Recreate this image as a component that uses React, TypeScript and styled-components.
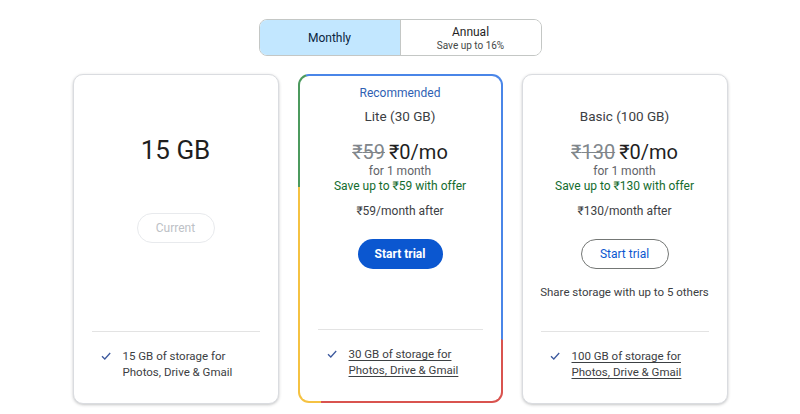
import styled, { createGlobalStyle, css } from "styled-components";

const GlobalStyle = createGlobalStyle`
  body {
    margin: 0;
    background: #ffffff;
    font-family: Roboto, "Liberation Sans", "DejaVu Sans", sans-serif;
    color: #1f1f1f;
  }
`;

const Page = styled.div`
  width: 800px;
  height: 414px;
  display: flex;
  flex-direction: column;
  align-items: center;
  padding-top: 19px;
  box-sizing: border-box;
  overflow: hidden;
`;

const Toggle = styled.div`
  display: flex;
  width: 283px;
  height: 37px;
  border: 1px solid #c4c7c5;
  border-radius: 8px;
  overflow: hidden;
  box-sizing: border-box;
`;

const ToggleOption = styled.div<{ $active?: boolean }>`
  flex: 1;
  display: flex;
  flex-direction: column;
  align-items: center;
  justify-content: center;
  font-size: 12px;
  color: ${(p) => (p.$active ? "#0a2540" : "#1f1f1f")};
  background: ${(p) => (p.$active ? "#c2e7ff" : "#ffffff")};
  border-right: ${(p) => (p.$active ? "1px solid #c4c7c5" : "none")};
`;

const ToggleSub = styled.span`
  font-size: 10px;
  color: #444746;
  margin-top: 1px;
`;

const Cards = styled.div`
  display: flex;
  gap: 19px;
  margin-top: 18px;
`;

const Card = styled.div`
  width: 206px;
  height: 330px;
  box-sizing: border-box;
  border: 1px solid #dadce0;
  border-radius: 10px;
  box-shadow: 0 1px 3px rgba(60, 64, 67, 0.3);
  background: #fff;
  display: flex;
  flex-direction: column;
`;

const RainbowFrame = styled.div`
  width: 205px;
  height: 329px;
  box-sizing: border-box;
  padding: 2px;
  border-radius: 11px;
  background: conic-gradient(
    from 0deg at 50% 50%,
    #4a86e8 0deg 135deg,
    #d9534f 135deg 206deg,
    #f5c242 206deg 297deg,
    #4c9a5e 297deg 330deg,
    #4a86e8 330deg 360deg
  );
  display: flex;
`;

const RainbowInner = styled.div`
  flex: 1;
  background: #fff;
  border-radius: 9px;
  display: flex;
  flex-direction: column;
`;

const Top = styled.div<{ $pad: number }>`
  flex: 1;
  display: flex;
  flex-direction: column;
  align-items: center;
  padding-top: ${(p) => p.$pad}px;
  text-align: center;
`;

const Recommended = styled.div<{ $hidden?: boolean }>`
  font-size: 12px;
  line-height: 16px;
  color: #2f5fb3;
  visibility: ${(p) => (p.$hidden ? "hidden" : "visible")};
`;

const PlanName = styled.div`
  font-size: 13.5px;
  line-height: 18px;
  color: #3c4043;
  margin-top: 6px;
`;

const Capacity = styled.div`
  font-size: 26px;
  line-height: 32px;
  color: #1f1f1f;
`;

const Price = styled.div`
  font-size: 20px;
  line-height: 24px;
  color: #1f1f1f;
  margin-top: 15px;
`;

const Old = styled.span`
  color: #80868b;
  text-decoration: line-through;
  text-decoration-thickness: 1px;
  margin-right: 4px;
`;

const Small = styled.div<{ $tone?: "gray" | "green" | "dark"; $gap?: number }>`
  font-size: 12px;
  line-height: 15px;
  margin-top: ${(p) => p.$gap ?? 0}px;
  color: ${(p) =>
    p.$tone === "green" ? "#146c2e" : p.$tone === "dark" ? "#3c4043" : "#5f6368"};
`;

const Button = styled.button<{ $variant: "filled" | "outlined" | "disabled"; $gap: number }>`
  height: 30px;
  border-radius: 15px;
  font-family: inherit;
  font-size: 12px;
  margin-top: ${(p) => p.$gap}px;
  cursor: pointer;
  ${(p) =>
    p.$variant === "filled"
      ? css`
          background: #0b57d0;
          color: #fff;
          border: none;
          width: 85px;
          font-weight: 700;
        `
      : p.$variant === "outlined"
      ? css`
          background: #fff;
          color: #0b57d0;
          border: 1px solid #747775;
          width: 88px;
        `
      : css`
          background: #fff;
          color: #bdc1c6;
          border: 1px solid #e8eaed;
          width: 78px;
        `}
`;

const Note = styled.div`
  font-size: 11.5px;
  line-height: 15px;
  color: #3c4043;
  margin-top: 16px;
`;

const Divider = styled.div`
  height: 1px;
  background: #e3e3e3;
  margin: 0 18px;
`;

const Features = styled.div`
  height: 71px;
  box-sizing: border-box;
  padding: 16px 0 0 27px;
  display: flex;
  gap: 12px;
`;

const Check = styled.svg`
  width: 10px;
  height: 10px;
  margin-top: 3px;
  flex-shrink: 0;
`;

const FeatureText = styled.div<{ $link?: boolean }>`
  font-size: 11.5px;
  line-height: 16px;
  color: #3c4043;
  text-decoration: ${(p) => (p.$link ? "underline" : "none")};
  text-underline-offset: 2px;
`;

function Feature({ text, link }: { text: [string, string]; link?: boolean }) {
  return (
    <Features>
      <Check viewBox="0 0 10 10">
        <path d="M1 5.2 L3.8 8 L9.2 2" fill="none" stroke="#3d5a9e" strokeWidth="1.3" />
      </Check>
      <FeatureText $link={link}>
        {text[0]}
        <br />
        {text[1]}
      </FeatureText>
    </Features>
  );
}

function PlanBody({
  recommended,
  name,
  oldPrice,
  outlined,
  note,
}: {
  recommended?: boolean;
  name: string;
  oldPrice: string;
  outlined?: boolean;
  note?: string;
}) {
  return (
    <>
      <Top $pad={recommended ? 9 : 10}>
        <Recommended $hidden={!recommended}>Recommended</Recommended>
        <PlanName>{name}</PlanName>
        <Price>
          <Old>₹{oldPrice}</Old>₹0/mo
        </Price>
        <Small>for 1 month</Small>
        <Small $tone="green">Save up to ₹{oldPrice} with offer</Small>
        <Small $tone="dark" $gap={10}>
          ₹{oldPrice}/month after
        </Small>
        <Button $variant={outlined ? "outlined" : "filled"} $gap={20}>
          Start trial
        </Button>
        {note && <Note>{note}</Note>}
      </Top>
      <Divider />
    </>
  );
}

export default function App() {
  return (
    <Page>
      <GlobalStyle />
      <Toggle>
        <ToggleOption $active>Monthly</ToggleOption>
        <ToggleOption>
          Annual
          <ToggleSub>Save up to 16%</ToggleSub>
        </ToggleOption>
      </Toggle>
      <Cards>
        <Card>
          <Top $pad={59}>
            <Capacity>15 GB</Capacity>
            <Button $variant="disabled" $gap={47}>
              Current
            </Button>
          </Top>
          <Divider />
          <Feature text={["15 GB of storage for", "Photos, Drive & Gmail"]} />
        </Card>
        <RainbowFrame>
          <RainbowInner>
            <PlanBody recommended name="Lite (30 GB)" oldPrice="59" />
            <Feature link text={["30 GB of storage for", "Photos, Drive & Gmail"]} />
          </RainbowInner>
        </RainbowFrame>
        <Card>
          <PlanBody
            name="Basic (100 GB)"
            oldPrice="130"
            outlined
            note="Share storage with up to 5 others"
          />
          <Feature link text={["100 GB of storage for", "Photos, Drive & Gmail"]} />
        </Card>
      </Cards>
    </Page>
  );
}
